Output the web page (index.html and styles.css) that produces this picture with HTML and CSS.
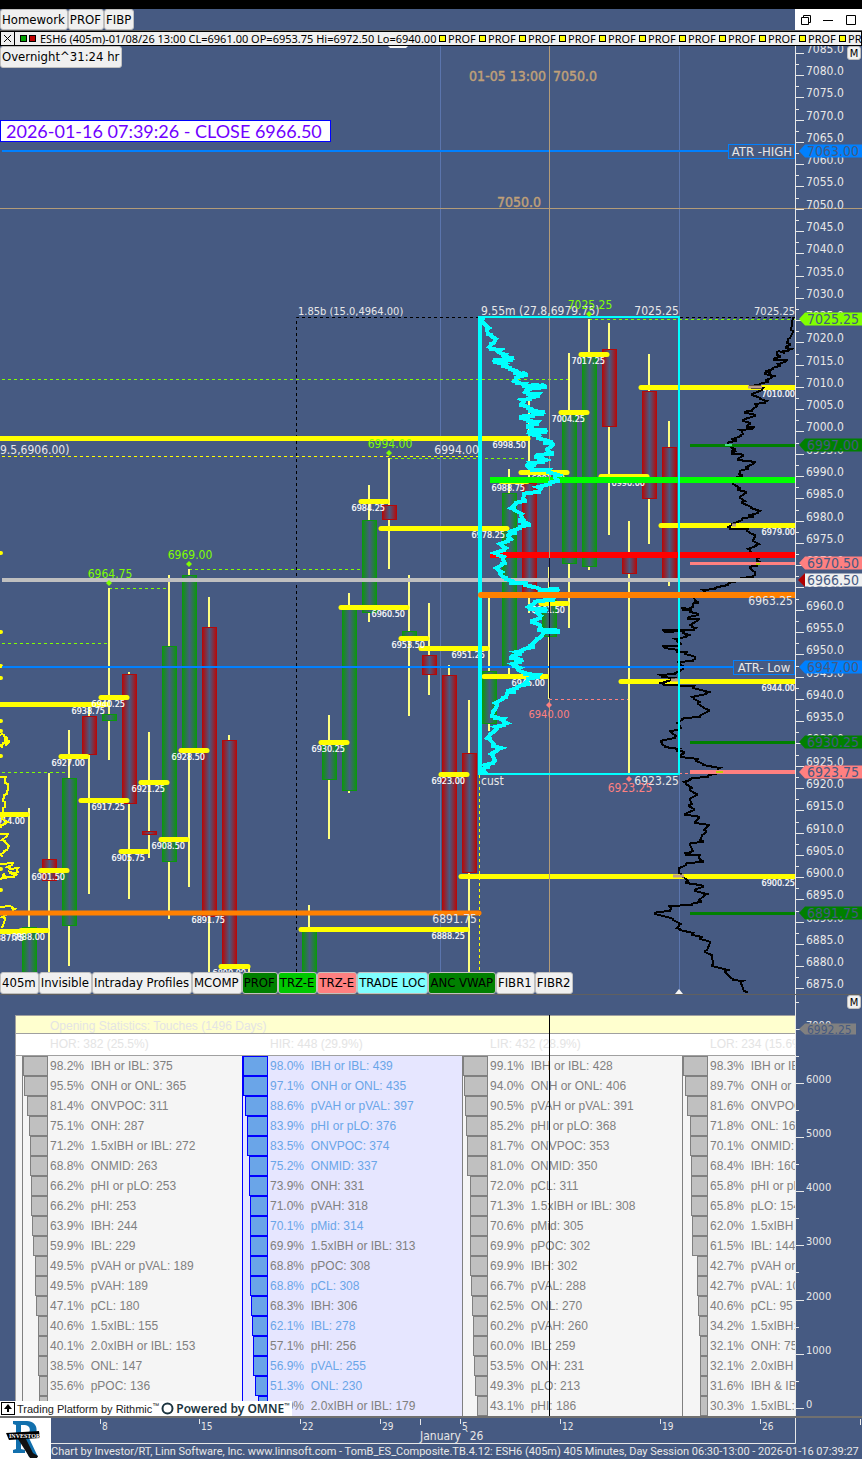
FILE: index.html
```html
<!DOCTYPE html>
<html lang="en">
<head>
    <meta charset="UTF-8">
    <meta name="viewport" content="width=device-width, initial-scale=1.0">
    <title>Investor/RT - ESH6 (405m)</title>
    <link rel="stylesheet" href="styles.css">
</head>
<body>

<header class="toolbar">
    <div class="group">
        <button class="btn">Homework</button>
        <button class="btn">PROF</button>
        <button class="btn">FIBP</button>
    </div>
    <div class="window-controls">
        <button aria-label="Restore"><svg width="12" height="12" viewBox="0 0 12 12"><path d="M1.500 3.500h7v7h-7zM3.500 3.500v-2h7v7h-2"/></svg></button>
        <button aria-label="Minimize"><svg width="12" height="12" viewBox="0 0 12 12"><path d="M1 6.500h10"/></svg></button>
        <button aria-label="Maximize"><svg width="12" height="12" viewBox="0 0 12 12"><path d="M1.500 1.500h9v9h-9z"/></svg></button>
    </div>
</header>

<div class="legend">
    <button class="legend-close" aria-label="Close"><svg width="9" height="9" viewBox="0 0 9 9"><path d="M1 1l7 7M8 1l-7 7"/></svg></button>
    <i class="swatch green"></i><i class="swatch red"></i>
    <span class="quote">ESH6 (405m)-01/08/26 13:00 CL=6961.00 OP=6953.75 Hi=6972.50 Lo=6940.00</span>
    <div class="studies" id="studies"></div>
</div>

<main>
    <section class="chart">
        <svg class="plot" id="plot" viewBox="0 46 862 948">
            <defs>
                <linearGradient id="up">
                    <stop offset="0" stop-color="#0c960f"/>
                    <stop offset="0.5" stop-color="#465a82"/>
                    <stop offset="1" stop-color="#0c960f"/>
                </linearGradient>
                <linearGradient id="down">
                    <stop offset="0" stop-color="#b40a0a"/>
                    <stop offset="0.5" stop-color="#465a82"/>
                    <stop offset="1" stop-color="#b40a0a"/>
                </linearGradient>
                <clipPath id="pane"><rect x="0" y="46" width="795" height="948"/></clipPath>
                <clipPath id="bars-area"><rect x="0" y="46" width="795" height="926"/></clipPath>
            </defs>

            <g class="grid">
                <path d="M440.500 46V994M679.500 46V994"/>
            </g>

            <g clip-path="url(#bars-area)">
                <g class="dash lime">
                    <path d="M2 379.500H568M389 458.500H526M189 569.500H361M109 588.500H168M2 643.500H108M2 772.500H66"/>
                </g>
                <path class="dash yellow" d="M2 456.500H479M479.500 775V972"/>
                <path class="dash black" d="M296.500 972V317.500H795"/>
                <path class="dash lime" d="M589 319.500H800"/>
                <path class="dash pink" d="M549 699.500H628M679 773.500H795"/>
                <g id="candles"></g>
                <g id="pocs"></g>
                <path class="left-profile rough" d="M0 735L4 736L5 740L9 742L6 746L3 744L2 748M0 777L5 779L8 785L7 792L4 796L5 803L3 809L6 815L2 819L5 824L1 828M0 834L7 836L5 842L8 848L4 852L2 857M0 864L12 865L10 869L17 870L15 874L10 873L14 877L6 879L3 876L0 880M0 907L12 908L13 911L5 919L2 928"/>
                <path class="left-dots" d="M0 553h1M0 632h1M0 666h1M0 678h1M0 721h1M0 731h1M0 756h1M0 869h1M0 890h1"/>
            </g>

            <g class="levels" clip-path="url(#pane)">
                <path class="profile-black rough" d="M793 317L793 332L788 340L790 345L786 348L788 351L784 353L777 353L780 357L774 360L785 362L780 366L773 369L770 373L765 374L771 378L768 382L760 385L752 388L762 390L752 395L760 399L765 403L757 406L752 411L745 413L755 416L743 421L750 424L747 427L752 429L742 432L741 436L736 441L728 444L732 453L735 450L732 454L743 456L738 460L753 464L748 469L740 472L742 476L736 479L741 482L733 484L738 490L746 493L740 498L742 503L751 508L758 513L753 517L742 520L732 525L730 529L747 531L755 536L753 541L756 546L750 551L757 560L760 563L757 566L750 568L755 573L753 577L743 580L728 585L715 589L705 592L694 597L698 603L693 605L690 609L683 610L690 612L698 615L688 619L697 621L692 627L694 630L665 632L683 633L686 637L677 641L679 646L665 648L677 652L685 654L695 658L693 661L680 664L683 669L675 674L662 677L672 680L664 685L693 688L706 694L694 699L698 704L709 711L700 717L682 720L679 725L679 730L672 733L675 738L661 742L665 747L677 751L684 753L680 757L696 761L703 765L718 770L720 773L708 777L690 780L686 784L690 790L697 795L690 800L689 806L694 810L685 815L699 818L695 823L707 827L706 832L702 836L703 842L690 845L690 853L686 855L699 857L703 862L686 865L679 869L681 875L686 883L703 887L695 891L704 896L701 902L692 905L671 908L670 911L655 914L673 920L679 926L680 930L692 935L700 939L710 943L705 952L712 956L712 966L725 972L733 980L741 983L747 993"/>
                <path stroke="#0080ff" stroke-width="2" d="M2 151H795M2 667H795"/>
                <path stroke="#008000" stroke-width="3" d="M690 445.500H795M690 742.500H795M690 913.500H795"/>
                <path stroke="#ff8080" stroke-width="3" d="M690 563.500H795"/>
                <path stroke="#ff8080" stroke-width="4" d="M690 772H795"/>
                <path stroke="#00ff00" stroke-width="6" d="M490 480H795"/>
                <path stroke="#ff0000" stroke-width="6" d="M490 555H795"/>
                <path stroke="#c0c0c0" stroke-width="4" d="M2 580H795"/>
                <path stroke="#bfa08a" stroke-width="3" d="M748 387H762M732 525H736M671 680H678M673 876H684"/>
                <path stroke="#c0d000" stroke-width="2" d="M756 564H760M716 772H723"/>
                <path stroke="#40e080" stroke-width="2" d="M725 445H732"/>
                <path class="orange" d="M481 595H800"/>
                <path class="orange round" d="M0 913H479"/>
            </g>

            <g class="crosshair">
                <path d="M549.500 46V994"/>
                <path d="M0 208.500H862"/>
                <path class="dark" d="M549.500 558V698"/>
            </g>

            <g fill="none" stroke="#00ffff">
                <path stroke-width="4" d="M480 316V775"/>
                <path stroke-width="2" d="M480 317H679V774H480"/>
                <path class="profile-cyan rough" d="M483 318L484 324L487 330L491 336L495 341L491 345L491 349L498 352L503 355L504 357L511 360L495 362L503 366L510 369L515 373L518 375L526 375L516 379L517 383L524 386L536 387L545 387L526 391L528 394L538 396L530 399L524 402L521 405L528 408L530 411L542 414L533 416L521 418L528 421L537 424L528 427L533 430L545 432L530 434L538 438L545 443L553 445L547 450L552 454L536 457L543 462L534 465L527 466L532 470L548 472L555 477L558 481L550 484L541 489L539 492L524 495L525 501L516 504L514 510L521 516L520 521L529 525L520 528L515 533L508 536L508 541L502 546L504 550L498 555L503 559L502 565L498 570L500 574L506 579L511 583L525 585L540 590L557 591L545 597L553 600L535 603L530 609L545 611L538 614L540 618L532 622L540 626L539 630L558 632L543 634L537 640L533 647L522 651L520 654L511 658L520 662L514 666L518 670L525 674L538 677L528 680L528 684L517 688L514 692L507 694L503 699L497 705L493 712L495 718L503 721L504 725L497 729L490 735L490 740L493 746L498 750L493 756L493 763L488 767L483 770L482 774"/>
            </g>
            <path class="orange" d="M481 595H792"/>

            <g id="notes"></g>

            <g class="atr">
                <rect x="728.500" y="144.500" width="66" height="14"/>
                <text x="762" y="156">ATR -HIGH</text>
                <rect x="733.500" y="660.500" width="61" height="14"/>
                <text x="764" y="672">ATR- Low</text>
            </g>
            <g class="clock">
                <rect x="0.500" y="120.500" width="330" height="21"/>
                <text x="6" y="138">2026-01-16 07:39:26 - CLOSE 6966.50</text>
            </g>
            <g fill="#f4f4f4"><path d="M388 46h20l-2 2h-16zM675 994l4-5 4 5z"/></g>
            <g id="price-axis"></g>
        </svg>
        <button class="btn session">Overnight^31:24 hr</button>
        <button class="btn menu">M</button>
        <div class="tabs">
            <button class="btn">405m</button>
            <button class="btn">Invisible</button>
            <button class="btn">Intraday Profiles</button>
            <button class="btn">MCOMP</button>
            <button class="btn dark-green">PROF</button>
            <button class="btn bright-green">TRZ-E</button>
            <button class="btn salmon">TRZ-E</button>
            <button class="btn aqua">TRADE LOC</button>
            <button class="btn dark-green">ANC VWAP</button>
            <button class="btn">FIBR1</button>
            <button class="btn">FIBR2</button>
        </div>
    </section>

    <section class="lower">
        <div class="stats-area">
            <div class="stats">
                <h2>Opening Statistics: Touches (1496 Days)</h2>
                <table>
                    <thead>
                    <tr id="stats-head"></tr>
                    </thead>
                    <tbody id="stats-body"></tbody>
                </table>
            </div>
            <span class="cursor-line"></span>
            <div class="powered">
                <svg width="15" height="15" viewBox="0 0 15 15"><rect x="1.500" y="1.500" width="13" height="12" fill="#fff" stroke="#000"/><path d="M8 3l4 5H9v3H7V8H4z" fill="#000"/></svg>
                <span>Trading Platform by Rithmic<sup>™</sup></span>
                <svg width="13" height="13" viewBox="0 0 13 13"><circle cx="6.500" cy="6.500" r="5" fill="none" stroke="#1c3540" stroke-width="2"/></svg>
                <strong>Powered by OMNE<sup>™</sup></strong>
            </div>
        </div>
        <div class="volume-axis">
            <svg id="volume-axis" width="67" height="421" viewBox="795 995 67 421"></svg>
            <button class="btn menu">M</button>
        </div>
    </section>
</main>

<footer>
    <svg class="logo" width="51" height="41" viewBox="0 0 51 41">
        <path fill="#1270ad" fill-rule="evenodd" d="M13 3h14c12 0 13 16 2 17l9 19h-9l-8-18v10l4 1v3H13v-3l3-1V7l-3-1zM21 7v9h4c7 0 6-9 0-9z"/>
        <path fill="#111" d="M18 21h8l7 14 5 3-1 2h-7z"/>
        <path fill="#000" d="M6 15l33-2 1 7-31 2z"/>
        <text x="9" y="20">INVESTOR</text>
    </svg>
    <div class="footer-main">
        <svg class="time-axis" id="time-axis" viewBox="51 1417 811 26"></svg>
        <p>Chart by Investor/RT, Linn Software, Inc. www.linnsoft.com - TomB_ES_Composite.TB.4.12: ESH6 (405m) 405 Minutes, Day Session 06:30-13:00 - 2026-01-16 07:39:27</p>
    </div>
</footer>

<script src="script.js"></script>
</body>
</html>
```

FILE: styles.css
```css
* {
    box-sizing: border-box;
}

body {
    margin: 0;
    padding-top: 9px;
    background-color: #000;
    font-family: "DejaVu Sans Condensed", "DejaVu Sans", sans-serif;
    font-size: 12px;
    color: #e8e8e8;
    overflow-x: hidden;
}

.toolbar {
    display: flex;
    justify-content: space-between;
    height: 22px;
    background-color: #465a82;
    border-bottom: 1px solid #606060;
}

.group, .tabs {
    display: flex;
}

.btn {
    height: 21px;
    padding: 0 2px 0 1px;
    border: 1px solid #c0c0c0;
    border-radius: 3px;
    background-color: #f0f0f0;
    color: #000;
    font-family: inherit;
    font-size: 13px;
    line-height: 18px;
    white-space: nowrap;
}

.window-controls {
    display: flex;
    width: 67px;
    background-color: #fff;
}

.window-controls button {
    flex: 1;
    padding: 0;
    border: none;
    background: none;
}

.window-controls svg, .legend-close svg {
    display: block;
    margin: auto;
    fill: none;
    stroke: #000;
}

/* legend strip */
.legend {
    display: flex;
    align-items: center;
    height: 15px;
    border: 1px solid #000;
    background-color: #f0f0f0;
    color: #000;
    font-family: "Noto Sans", sans-serif;
    font-size: 11px;
    line-height: 13px;
    white-space: nowrap;
    overflow: hidden;
}

.legend-close {
    flex: none;
    width: 14px;
    height: 13px;
    margin-right: 5px;
    padding: 0;
    border: none;
    border-right: 1px solid #000;
    background: none;
}

.swatch {
    flex: none;
    width: 7px;
    height: 7px;
    margin-right: 2px;
    border: 1px solid #000;
}

.swatch.green {
    background-color: #00a000;
}

.swatch.red {
    background-color: #c00000;
}

.swatch.yellow {
    background-color: #ff0;
}

.quote {
    flex: none;
    width: 401px;
    padding-left: 2px;
}

.studies {
    display: flex;
}

.study {
    flex: none;
    display: flex;
    align-items: center;
    width: 40px;
}

/* price chart */
.chart {
    position: relative;
    background-color: #465a82;
    border-bottom: 1px solid #606060;
}

.plot, .time-axis, .logo, .lower svg {
    display: block;
}

.plot, .time-axis {
    width: 100%;
    height: auto;
}

svg text {
    font-family: "DejaVu Sans Condensed", "DejaVu Sans", sans-serif;
    font-size: 12px;
    fill: #e8e8e8;
}

.grid path {
    stroke: #5b75ad;
}

.dash {
    fill: none;
    stroke-dasharray: 3 3;
}

.lime {
    stroke: #80ff00;
}

.yellow {
    stroke: #ff0;
}

.black {
    stroke: #000;
}

.pink {
    stroke: #ff8080;
}

.wick {
    stroke: #ffff80;
    stroke-width: 2;
}

.body-up {
    fill: url(#up);
    stroke: #0c960f;
}

.body-down {
    fill: url(#down);
    stroke: #b40a0a;
}

.poc {
    stroke: #ff0;
    stroke-width: 5;
    stroke-linecap: round;
}

svg .poc-label {
    font-size: 9px;
    fill: #fff;
    stroke: #fff;
    stroke-width: 0.2px;
    text-anchor: end;
}

.left-profile {
    fill: none;
    stroke: #ff0;
    stroke-width: 2;
}

.left-dots {
    stroke: #ff0;
    stroke-width: 4;
    stroke-linecap: round;
}

.profile-black {
    fill: none;
    stroke: #000;
    stroke-width: 2;
}

.profile-cyan {
    stroke-width: 4;
}

.rough {
    shape-rendering: crispEdges;
}

.orange {
    stroke: #ff8000;
    stroke-width: 6;
    stroke-linecap: round;
}

.orange.round {
    stroke-width: 5;
}

.crosshair path {
    stroke: #b39b78;
}

.crosshair .dark {
    stroke: #101030;
}

svg .small {
    font-size: 11px;
}

svg .day {
    font-size: 10px;
}

svg .note-lime {
    fill: #80ff00;
}

svg .note-pink {
    fill: #ff8080;
}

svg .note-tan {
    fill: #c0a078;
    stroke: #c0a078;
    stroke-width: 0.4px;
    font-size: 14px;
}

.atr rect {
    fill: #465a82;
    stroke: #0080ff;
}

.atr text {
    font-size: 13px;
    text-anchor: middle;
}

.clock rect {
    fill: #fff;
    stroke: #00f;
}

.clock text {
    font-family: Lato, sans-serif;
    font-size: 18px;
    fill: #7000ff;
}

.axis-line {
    fill: none;
    stroke: #e8e8e8;
}

svg .tag-text {
    font-size: 14px;
    fill: #465a82;
}

svg .volume-tag {
    fill: #465a82;
}

.session {
    position: absolute;
    top: 0;
    left: 0;
    height: 22px;
}

.menu {
    position: absolute;
    top: 0;
    right: 1px;
    width: 14px;
    height: 14px;
    padding: 0;
    font-size: 11px;
    line-height: 11px;
}

.tabs {
    position: absolute;
    left: 0;
    bottom: 0;
}

.tabs .btn {
    height: 22px;
}

.tabs .dark-green {
    background-color: #008000;
}

.tabs .bright-green {
    background-color: #00c800;
}

.tabs .salmon {
    background-color: #ff8080;
}

.tabs .aqua {
    background-color: #80ffff;
}

/* statistics pane */
.lower {
    display: grid;
    grid-template-columns: minmax(0, 1fr) 67px;
    background-color: #465a82;
    border-bottom: 2px solid #707070;
}

.stats-area {
    position: relative;
    height: 421px;
    padding: 20px 0 0 15px;
    overflow: hidden;
}

.stats {
    border: 1px solid #a0a0a0;
    border-right: none;
    background-color: #f5f5f5;
    font-family: "Liberation Sans", Arial, sans-serif;
    font-size: 12px;
    color: #808080;
    overflow: hidden;
}

.stats h2 {
    margin: 0;
    padding-left: 34px;
    height: 18px;
    border-bottom: 1px solid #a0a0a0;
    background-color: #ffffcf;
    color: #e4e4e4;
    font-size: 12px;
    font-weight: normal;
    line-height: 20px;
}

.stats table {
    width: 886px;
    table-layout: fixed;
    border-collapse: collapse;
}

.stats th {
    width: 220px;
    height: 21px;
    padding: 0 0 0 28px;
    border-bottom: 1px solid #a0a0a0;
    background-color: #fff;
    color: #e4e4e4;
    font-weight: normal;
    line-height: 20px;
    text-align: left;
}

.stats th:first-child {
    width: 226px;
    padding-left: 34px;
}

.stats td {
    height: 20px;
    padding: 0;
    line-height: 20px;
    white-space: pre;
}

.stats td:first-child {
    padding-left: 6px;
}

.stat {
    display: flex;
    height: 20px;
    border-left: 1px solid #808080;
}

.bar-box {
    display: flex;
    justify-content: flex-end;
    width: 25px;
    margin-right: 2px;
}

.bar {
    border: 1px solid #808080;
    background-color: #c0c0c0;
}

.blue {
    background-color: #e6e6ff;
}

.blue .stat {
    border-left-color: #00f;
}

.blue .bar {
    border-color: #00f;
    background-color: #6aa5e8;
}

.marked {
    color: #6aa5e8;
}

.cursor-line {
    position: absolute;
    top: 20px;
    left: 549px;
    width: 1px;
    height: 100%;
    background-color: #000;
}

.powered {
    position: absolute;
    left: 0;
    bottom: 0;
    display: flex;
    align-items: center;
    gap: 2px;
    width: 292px;
    height: 15px;
    background-color: #fff;
    color: #222;
    font-family: "Liberation Sans", Arial, sans-serif;
    font-size: 11px;
    white-space: nowrap;
}

.powered svg {
    flex: none;
}

.powered strong {
    font-family: "Noto Sans", sans-serif;
    font-size: 12px;
    font-weight: 600;
    color: #1c3540;
}

.powered sup {
    font-size: 7px;
    line-height: 0;
}

.volume-axis {
    position: relative;
}

/* footer */
footer {
    display: flex;
    background-color: #465a82;
}

.logo {
    flex: none;
    background-color: #fff;
}

.logo text {
    font-family: "Liberation Serif", serif;
    font-size: 6px;
    font-weight: bold;
    fill: #fff;
}

.footer-main {
    flex: 1;
    min-width: 0;
}

.footer-main p {
    margin: 0;
    font-family: Roboto, sans-serif;
    font-size: 11px;
    line-height: 15px;
    white-space: nowrap;
    overflow: hidden;
}
```

FILE: script.js
```js
// x, wick top, wick bottom, body top, body bottom, direction
const candles = [
    [29, 808, 980, 927, 980, "up"],
    [49, 773, 980, 859, 881, "down"],
    [69, 730, 966, 778, 926, "up"],
    [89, 706, 894, 716, 755, "down"],
    [109, 588, 760, 714, 721, "up"],
    [129, 672, 899, 674, 804, "down"],
    [149, 732, 858, 831, 835, "down"],
    [169, 575, 919, 646, 862, "up"],
    [189, 569, 887, 575, 750, "up"],
    [209, 597, 980, 627, 917, "down"],
    [229, 735, 968, 740, 967, "down"],
    [309, 905, 980, 931, 980, "up"],
    [329, 715, 839, 742, 780, "up"],
    [349, 593, 793, 608, 791, "up"],
    [369, 485, 622, 520, 613, "up"],
    [389, 458, 569, 505, 520, "down"],
    [409, 575, 716, 631, 640, "up"],
    [429, 603, 695, 655, 675, "down"],
    [449, 665, 915, 675, 911, "down"],
    [469, 700, 980, 753, 873, "down"],
    [489, 597, 731, 671, 724, "up"],
    [509, 469, 674, 493, 668, "up"],
    [529, 400, 613, 483, 595, "down"],
    [549, 567, 699, 600, 637, "up"],
    [569, 353, 628, 412, 564, "up"],
    [589, 319, 570, 355, 567, "up"],
    [609, 323, 535, 349, 427, "down"],
    [629, 521, 774, 555, 574, "down"],
    [649, 354, 544, 391, 499, "down"],
    [669, 421, 586, 447, 580, "down"]
];

// x1, x2, y, label
const pocs = [
    [-5, 28, 814, "6914.00"],
    [-5, 108, 704, "6938.75"],
    [99, 128, 697, "6940.25"],
    [59, 88, 756, "6927.00"],
    [79, 128, 800, "6917.25"],
    [119, 148, 851, "6905.75"],
    [139, 168, 782, "6921.25"],
    [159, 188, 839, "6908.50"],
    [179, 208, 750, "6928.50"],
    [39, 68, 870, "6901.50"],
    [-5, 27, 931, "6887.75"],
    [19, 48, 930, "6888.00"],
    [219, 249, 966, "6890.00"],
    [299, 468, 929, "6888.25"],
    [319, 348, 742, "6930.25"],
    [339, 408, 607, "6960.50"],
    [359, 388, 501, "6984.25"],
    [379, 508, 528, "6978.25"],
    [399, 428, 638, "6953.50"],
    [419, 488, 648, "6951.25"],
    [439, 468, 774, "6923.00"],
    [459, 798, 876, "6900.25"],
    [482, 548, 676, "6945.00"],
    [499, 528, 481, "6988.75"],
    [519, 568, 472, "6991.50"],
    [539, 568, 603, "6961.50"],
    [559, 588, 412, "7004.25"],
    [579, 608, 354, "7017.25"],
    [599, 648, 476, "6990.00"],
    [639, 798, 387, "7010.00"],
    [619, 798, 681, "6944.00"],
    [659, 798, 525, "6979.00"],
    [-5, 529, 438, "6998.50"]
];

// x, y, text, anchor, class
const notes = [
    [298, 315, "1.85b (15.0,4964.00)", "start", "small"],
    [481, 315, "9.55m (27.8,6979.75)", "start", ""],
    [679, 315, "7025.25", "end", ""],
    [795, 315, "7025.25", "end", "small"],
    [0, 454, "9.5,6906.00)", "start", ""],
    [479, 454, "6994.00", "end", ""],
    [793, 605, "6963.25", "end", ""],
    [477, 923, "6891.75", "end", ""],
    [225, 923, "6891.75", "end", "poc-label"],
    [679, 785, "6923.25", "end", ""],
    [481, 785, "cust", "start", ""],
    [590, 309, "7025.25", "middle", "note-lime"],
    [390, 448, "6994.00", "middle", "note-lime"],
    [110, 578, "6964.75", "middle", "note-lime"],
    [190, 559, "6969.00", "middle", "note-lime"],
    [549, 718, "6940.00", "middle", "note-pink small"],
    [630, 792, "6923.25", "middle", "note-pink"],
    [546, 81, "01-05 13:00", "end", "note-tan"],
    [553, 81, "7050.0", "start", "note-tan"],
    [541, 207, "7050.0", "end", "note-tan"]
];

const diamonds = [
    [589, 314, "#80ff00"], [389, 453, "#80ff00"], [109, 583, "#80ff00"],
    [189, 564, "#80ff00"], [549, 705, "#ff8080"], [629, 779, "#ff8080"]
];

// y, text, background
const tags = [
    [151, "7063.00", "#0080ff"],
    [319, "7025.25", "#80ff00"],
    [445, "6997.00", "#008000"],
    [563, "6970.50", "#ff8080"],
    [580, "6966.50", "#f0f0f0"],
    [667, "6947.00", "#0080ff"],
    [742, "6930.25", "#008000"],
    [772, "6923.75", "#ff8080"],
    [913, "6891.75", "#008000"]
];

const stats = [
    {
        title: "HOR: 382 (25.5%)",
        rows: ["98.2 IBH or IBL: 375", "95.5 ONH or ONL: 365", "81.4 ONVPOC: 311", "75.1 ONH: 287", "71.2 1.5xIBH or IBL: 272", "68.8 ONMID: 263", "66.2 pHI or pLO: 253", "66.2 pHI: 253", "63.9 IBH: 244", "59.9 IBL: 229", "49.5 pVAH or pVAL: 189", "49.5 pVAH: 189", "47.1 pCL: 180", "40.6 1.5xIBL: 155", "40.1 2.0xIBH or IBL: 153", "38.5 ONL: 147", "35.6 pPOC: 136", "34.0 pMid: 130"]
    },
    {
        title: "HIR: 448 (29.9%)",
        blue: true,
        marked: [0, 1, 2, 3, 4, 5, 8, 11, 13, 15, 16],
        rows: ["98.0 IBH or IBL: 439", "97.1 ONH or ONL: 435", "88.6 pVAH or pVAL: 397", "83.9 pHI or pLO: 376", "83.5 ONVPOC: 374", "75.2 ONMID: 337", "73.9 ONH: 331", "71.0 pVAH: 318", "70.1 pMid: 314", "69.9 1.5xIBH or IBL: 313", "68.8 pPOC: 308", "68.8 pCL: 308", "68.3 IBH: 306", "62.1 IBL: 278", "57.1 pHI: 256", "56.9 pVAL: 255", "51.3 ONL: 230", "40.0 2.0xIBH or IBL: 179"]
    },
    {
        title: "LIR: 432 (28.9%)",
        rows: ["99.1 IBH or IBL: 428", "94.0 ONH or ONL: 406", "90.5 pVAH or pVAL: 391", "85.2 pHI or pLO: 368", "81.7 ONVPOC: 353", "81.0 ONMID: 350", "72.0 pCL: 311", "71.3 1.5xIBH or IBL: 308", "70.6 pMid: 305", "69.9 pPOC: 302", "69.9 IBH: 302", "66.7 pVAL: 288", "62.5 ONL: 270", "60.2 pVAH: 260", "60.0 IBL: 259", "53.5 ONH: 231", "49.3 pLO: 213", "43.1 pHI: 186"]
    },
    {
        title: "LOR: 234 (15.6%)",
        rows: ["98.3 IBH or IBL: 230", "89.7 ONH or ONL: 210", "81.6 ONVPOC: 191", "71.8 ONL: 168", "70.1 ONMID: 164", "68.4 IBH: 160", "65.8 pHI or pLO: 154", "65.8 pLO: 154", "62.0 1.5xIBH or IBL: 145", "61.5 IBL: 144", "42.7 pVAH or pVAL: 100", "42.7 pVAL: 100", "40.6 pCL: 95", "34.2 1.5xIBH: 80", "32.1 ONH: 75", "32.1 2.0xIBH or IBL: 75", "31.6 IBH & IBL: 74", "30.3 1.5xIBL: 71"]
    }
];

function label(x, y, text, anchor, cls) {
    return `<text x="${x}" y="${y}" text-anchor="${anchor}" class="${cls}">${text}</text>`;
}

function showCandles() {
    let text = "";
    candles.forEach(([x, high, low, top, bottom, dir]) => {
        text += `<path class="wick" d="M${x} ${high}V${low}"/>`;
        text += `<rect class="body-${dir}" x="${x - 6.5}" y="${top + 0.5}" width="14" height="${bottom - top - 1}"/>`;
    });
    text += `<path class="wick" d="M249 965V980"/>`;
    document.getElementById("candles").innerHTML = text;
}

function showPocs() {
    let lines = "";
    let labels = "";
    pocs.forEach(([x1, x2, y, price]) => {
        lines += `<path class="poc" d="M${x1 + 2} ${y + 0.5}H${x2 - 1}"/>`;
        labels += label(x2 - 3, y + 10, price, "end", "poc-label");
    });
    document.getElementById("pocs").innerHTML = lines + labels;
}

// step the profile outlines row by row, one volume bar per price
function stepProfiles() {
    document.querySelectorAll(".rough").forEach(path => {
        let count = 0;
        const d = path.getAttribute("d").replace(/L(\d+) (\d+)/g, (match, x, y) => {
            count++;
            const nudge = [3, -2, 2, -3, 1][count % 5];
            return `L${+x + nudge} ${y - 2}L${x} ${y - 1}V${y}`;
        });
        path.setAttribute("d", d);
    });
}

function showNotes() {
    let text = "";
    notes.forEach(item => {
        text += label(...item);
    });
    diamonds.forEach(([x, y, color]) => {
        text += `<path fill="${color}" d="M${x - 3} ${y}l3 -3 3 3 -3 3z"/>`;
    });
    document.getElementById("notes").innerHTML = text;
}

function showPriceAxis() {
    let text = `<path class="axis-line" d="M795.5 46V994"/>`;
    for (let price = 7085; price >= 6875; price -= 5) {
        const y = Math.round(75 + (7080 - price) * 4.456);
        text += `<path class="axis-line" d="M796 ${y + 0.5}h8M796 ${y - 10.5}h3"/>`;
        text += label(806, y, price + ".0", "start", "");
    }
    tags.forEach(([y, price, background]) => {
        text += `<path fill="${background}" d="M799 ${y}l6 -6.500H862v13H805z"/>`;
        text += label(807, y + 5, price, "start", "tag-text");
    });
    text += `<path fill="#b00000" d="M798 580l7 -7v14z"/>`;
    document.getElementById("price-axis").innerHTML = text;
}

function showVolumeAxis() {
    let text = `<path class="axis-line" d="M795.5 995V1416M796 1002.5h3"/>`;
    for (let value = 7000; value >= 0; value -= 1000) {
        const y = Math.round(1408 - value * 0.0542);
        text += `<path class="axis-line" d="M796 ${y + 0.5}h8M796 ${y + 27.5}h3"/>`;
        text += label(806, y, value, "start", "small");
    }
    text += `<path fill="#808080" d="M799 1029l6 -5.500H856v11H805z"/>`;
    text += label(807, 1034, "6992.25", "start", "volume-tag");
    document.getElementById("volume-axis").innerHTML = text;
}

function showTimeAxis() {
    const days = [[101, "8"], [200, "15"], [301, "22"], [381, "29"], [461, "5"], [561, "12"], [661, "19"], [761, "26"]];
    let text = `<path class="axis-line" d="M51 1442.5H795.5V1417M420.5 1418v6M860.5 1418v6"/>`;
    days.forEach(([x, day]) => {
        text += `<path class="axis-line" d="M${x - 0.5} 1418v5"/>`;
        text += label(x + 1, 1429, day, "start", "day");
    });
    text += label(420, 1439, "January `26", "start", "");
    document.getElementById("time-axis").innerHTML = text;
}

function showStats() {
    let head = "";
    stats.forEach(group => {
        head += "<th>" + group.title + "</th>";
    });
    document.getElementById("stats-head").innerHTML = head;

    let body = "";
    for (let i = 0; i < 18; i++) {
        body += "<tr>";
        stats.forEach(group => {
            const row = group.rows[i];
            const space = row.indexOf(" ");
            const percent = row.slice(0, space);
            const name = row.slice(space + 1).replace("&", "&amp;");
            const marked = group.marked && group.marked.includes(i) ? "marked" : "";
            body += `<td class="${group.blue ? "blue" : ""}"><div class="stat ${marked}">`;
            body += `<span class="bar-box"><span class="bar" style="width:${Math.round(percent * 0.255)}px"></span></span>`;
            body += `<span>${percent}%  ${name}</span></div></td>`;
        });
        body += "</tr>";
    }
    document.getElementById("stats-body").innerHTML = body;
}

function showStudies() {
    let text = "";
    for (let i = 0; i < 11; i++) {
        text += `<span class="study"><i class="swatch yellow"></i>PROF</span>`;
    }
    document.getElementById("studies").innerHTML = text;
}

showStudies();
showCandles();
showPocs();
stepProfiles();
showNotes();
showPriceAxis();
showVolumeAxis();
showTimeAxis();
showStats();
```
